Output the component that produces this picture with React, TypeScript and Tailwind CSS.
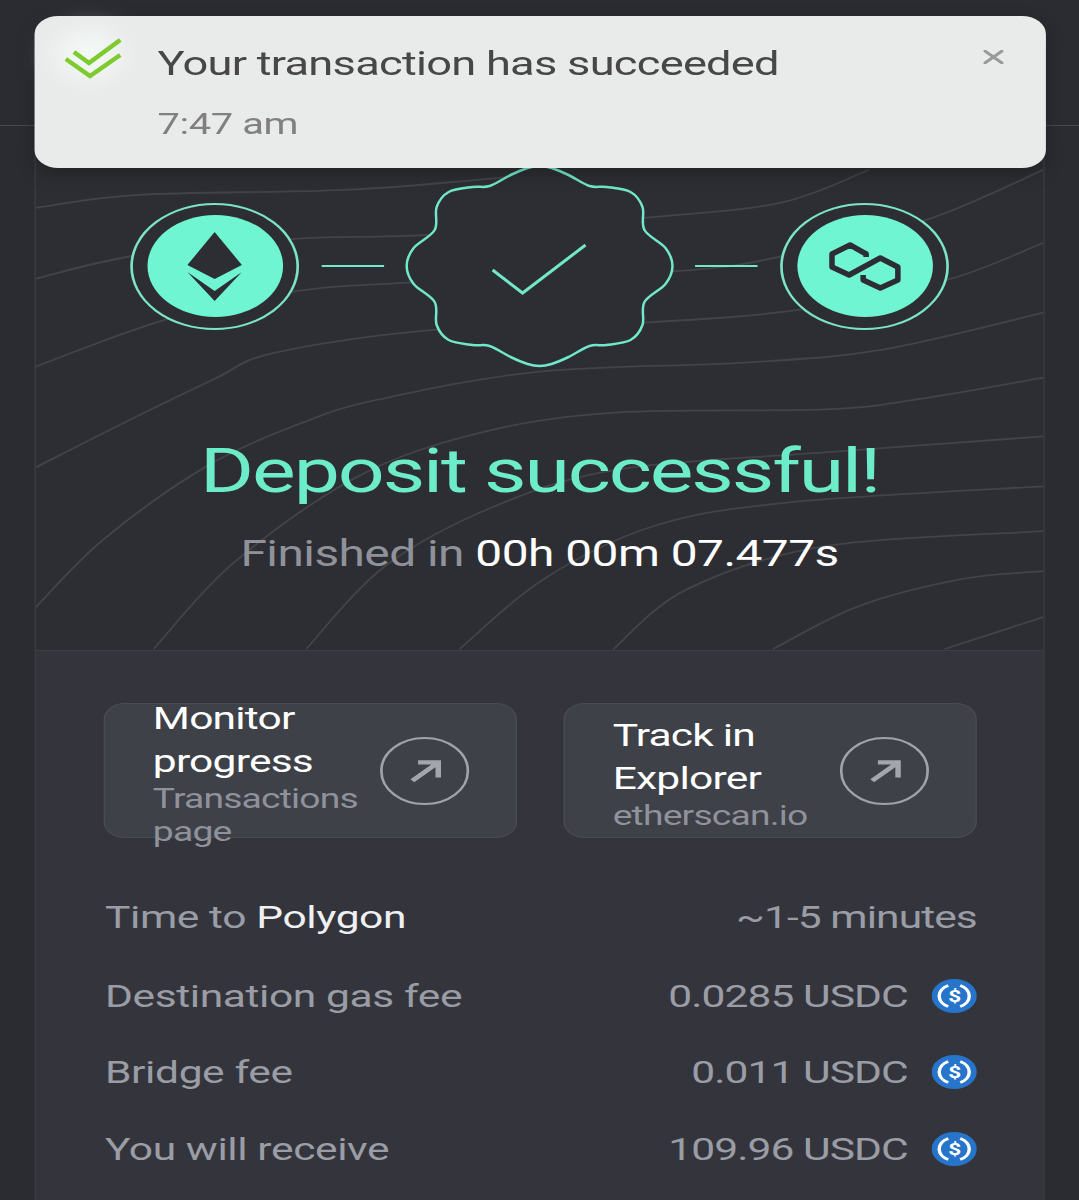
import React from 'react'

type Pt = [number, number]

// catmull-rom through the points, gives smooth contour lines
function smooth(pts: Pt[], closed = false) {
  const n = pts.length
  const at = (i: number) => (closed ? pts[(i + n) % n] : pts[Math.max(0, Math.min(n - 1, i))])
  let d = `M${pts[0][0]} ${pts[0][1]}`
  const last = closed ? n : n - 1
  for (let i = 0; i < last; i++) {
    const [p0, p1, p2, p3] = [at(i - 1), at(i), at(i + 1), at(i + 2)]
    const c1 = [p1[0] + (p2[0] - p0[0]) / 6, p1[1] + (p2[1] - p0[1]) / 6]
    const c2 = [p2[0] - (p3[0] - p1[0]) / 6, p2[1] - (p3[1] - p1[1]) / 6]
    d += `C${c1[0]} ${c1[1]} ${c2[0]} ${c2[1]} ${p2[0]} ${p2[1]}`
  }
  return closed ? d + 'Z' : d
}

const contours: Pt[][] = [
  [[35, 208], [138, 195], [344, 190], [499, 178], [560, 170]],
  [[35, 279], [134, 256], [294, 239], [429, 235], [645, 218], [781, 203], [870, 170]],
  [[35, 367], [165, 320], [293, 292], [410, 283], [671, 272], [781, 257], [928, 220], [1045, 170]],
  [[35, 468], [124, 423], [213, 380], [275, 353], [437, 330], [643, 323], [801, 310], [949, 280], [1045, 243]],
  [[35, 608], [103, 540], [206, 467], [303, 423], [379, 400], [540, 372], [746, 363], [884, 350], [1045, 313]],
  [[153, 650], [234, 563], [358, 477], [482, 433], [619, 413], [826, 410], [918, 400], [1045, 378]],
  [[306, 650], [385, 567], [495, 507], [619, 470], [826, 453], [1045, 437]],
  [[460, 650], [544, 580], [654, 527], [791, 503], [1045, 487]],
  [[614, 650], [688, 590], [826, 547], [1045, 532]],
  [[774, 650], [860, 607], [963, 580], [1045, 572]],
  [[946, 650], [1045, 618]],
]

const quarter: Pt[] = [
  [-133, 0], [-126, -18], [-105, -36], [-103, -59], [-91, -74], [-67, -79], [-50, -80], [-29, -91], [-12, -98], [0, -100],
]
const badgePts: Pt[] = [
  ...quarter,
  ...quarter.slice(0, -1).reverse().map(([x, y]) => [-x, y] as Pt),
  ...quarter.slice(1).map(([x, y]) => [-x, -y] as Pt),
  ...quarter.slice(1, -1).reverse().map(([x, y]) => [x, -y] as Pt),
].map(([x, y]) => [x + 539, y + 266] as Pt)

function Ring({ children }: { children: React.ReactNode }) {
  return (
    <div className="relative flex h-[127px] w-[127px] shrink-0 items-center justify-center rounded-full border-2 border-[#7be3c8] bg-[#2d2e33]">
      <div className="flex h-[102px] w-[102px] items-center justify-center rounded-full bg-[#70f5d3]">{children}</div>
    </div>
  )
}

function Usdc() {
  return (
    <svg viewBox="0 0 34 34" className="h-[34px] w-[34px] shrink-0">
      <circle cx="17" cy="17" r="17" fill="#2775ca" />
      <path d="M12.5 6.5A11.5 11.5 0 0 0 12.5 27.5M21.5 6.5A11.5 11.5 0 0 1 21.5 27.5" fill="none" stroke="#fff" strokeWidth="2.6" />
      <text x="17" y="23" textAnchor="middle" fontSize="17" fontWeight="700" fill="#fff" fontFamily="Roboto, sans-serif">$</text>
    </svg>
  )
}

function LinkCard({ title, sub }: { title: string; sub: string }) {
  return (
    <div className="flex h-[135px] w-[311px] items-center justify-between rounded-[16px] border border-[#4a4c53] bg-[#3e4148] pl-[36px] pr-[35px]">
      <div className="w-[165px] pt-[4px]">
        <div className="text-[32px] leading-[43px] tracking-[-0.6px] text-white">{title}</div>
        <div className="-mt-[1px] text-[28px] leading-[33px] tracking-[-0.6px] text-[#8f929a]">{sub}</div>
      </div>
      <div className="flex h-[68px] w-[67px] shrink-0 items-center justify-center rounded-full border-2 border-[#a0a3a9]">
        <svg viewBox="0 0 24 24" className="h-[34px] w-[26px]" fill="none" stroke="#a3a6ad" strokeWidth="3.8">
          <path d="M3 21 20 5M7 4h14v14" />
        </svg>
      </div>
    </div>
  )
}

function Row({ label, value, strong, icon }: { label: string; value: string; strong?: string; icon?: boolean }) {
  return (
    <div className="flex h-[34px] items-center justify-between text-[32px] text-[#9a9da5]">
      <span className="pl-[1px] tracking-[-0.3px]">
        {label} {strong && <span className="text-[#eef0f2]">{strong}</span>}
      </span>
      <span className="flex items-center gap-[18px] tracking-[-0.7px]">
        {value}
        {icon && <Usdc />}
      </span>
    </div>
  )
}

export default function App() {
  return (
    <div className="h-[1200px] w-[1079px] overflow-hidden bg-[#2b2c31]">
      {/* the reference is stretched sideways, so the whole page is laid out narrow and scaled */}
      <div className="relative h-[1200px] w-[812px] origin-top-left scale-x-[1.329] font-['Roboto',sans-serif]">
        <div className="h-[126px] border-b border-[#47484e]" />

        <div className="mx-[26px] border-x border-[#3f4046]">
          {/* hero */}
          <div className="relative flex h-[525px] flex-col items-center overflow-hidden border-b border-[#3f4046] bg-[#2d2e33] pt-[38px]">
            <svg viewBox="35 126 1010 525" preserveAspectRatio="none" className="absolute inset-0 h-full w-full" fill="none" stroke="#434449" strokeWidth="1.8">
              {contours.map((c, i) => (
                <path key={i} d={smooth(c)} />
              ))}
            </svg>

            <div className="relative flex items-center gap-[17px]">
              <Ring>
                <svg viewBox="188 232 54 69" preserveAspectRatio="none" className="h-[69px] w-[41px]" fill="#2d2e33">
                  <path d="M215 232 242 265 215 279 188 265Z" />
                  <path d="M188 272 215 291 242 272 215 301Z" />
                </svg>
              </Ring>
              <div className="h-[2px] w-[47px] bg-[#70e8c9]" />
              <svg viewBox="406 164 266 204" preserveAspectRatio="none" className="h-[204px] w-[200px] shrink-0 overflow-visible">
                <path d={smooth(badgePts, true)} fill="#2d2e33" stroke="#70e8c9" strokeWidth="2.5" />
                <path d="M492 270 522 293 585 245" fill="none" stroke="#70e8c9" strokeWidth="3" />
              </svg>
              <div className="h-[2px] w-[47px] bg-[#70e8c9]" />
              <Ring>
                <svg viewBox="828 240 74 52" preserveAspectRatio="none" className="h-[52px] w-[56px]" fill="none" stroke="#2d2e33" strokeWidth="5.5" strokeLinejoin="round">
                  <path d="M866 257V254L850 245 832 254V267L849 275 880 258 897.5 267V280L880 288 863 280V275" />
                </svg>
              </Ring>
            </div>

            <h1 className="relative mt-[63px] text-[62px] leading-[80px] tracking-[-1.6px] text-[#6cecc8]">Deposit successful!</h1>
            <p className="relative mt-[21px] text-[36px] leading-[44px] tracking-[-0.4px] text-[#8f929a]">
              Finished in <span className="text-white">00h 00m 07.477s</span>
            </p>
          </div>

          {/* details */}
          <div className="h-[549px] bg-[#34353c] pl-[51px] pr-[50px] pt-[52px]">
            <div className="flex justify-between">
              <LinkCard title="Monitor progress" sub="Transactions page" />
              <LinkCard title="Track in Explorer" sub="etherscan.io" />
            </div>
            <div className="mt-[62px] flex flex-col gap-[42.5px]">
              <div className="mb-[2px]">
                <Row label="Time to" strong="Polygon" value="~1-5 minutes" />
              </div>
              <Row label="Destination gas fee" value="0.0285 USDC" icon />
              <Row label="Bridge fee" value="0.011 USDC" icon />
              <Row label="You will receive" value="109.96 USDC" icon />
            </div>
          </div>
        </div>

        {/* toast */}
        <div className="absolute left-[25.5px] top-[16px] flex h-[152px] w-[761.5px] rounded-[18px] bg-[#e9eaea] shadow-[0_6px_16px_rgba(0,0,0,0.25)]">
          <div className="absolute left-[16px] top-[14px] h-[50px] w-[50px] rounded-full bg-[#f3f9f6] blur-md" />
          <svg viewBox="60 36 66 46" preserveAspectRatio="none" className="relative ml-[19px] mt-[20px] h-[46px] w-[50px] shrink-0" fill="none" stroke="#7ecb2f" strokeWidth="4.5">
            <path d="M66 59 90 76 120 55M74 52 89 63 120 40" />
          </svg>
          <div className="relative ml-[24px] pt-[24px]">
            <div className="text-[34px] leading-[46px] tracking-[-0.55px] text-[#474747]">Your transaction has succeeded</div>
            <div className="mt-[19px] text-[30px] leading-[38px] tracking-[-0.3px] text-[#808080]">7:47 am</div>
          </div>
          <svg viewBox="0 0 19 14" preserveAspectRatio="none" className="absolute left-[714px] top-[34px] h-[14px] w-[15px]" fill="none" stroke="#9a9a9a" strokeWidth="3">
            <path d="M0 0 19 14M19 0 0 14" />
          </svg>
        </div>
      </div>
    </div>
  )
}
